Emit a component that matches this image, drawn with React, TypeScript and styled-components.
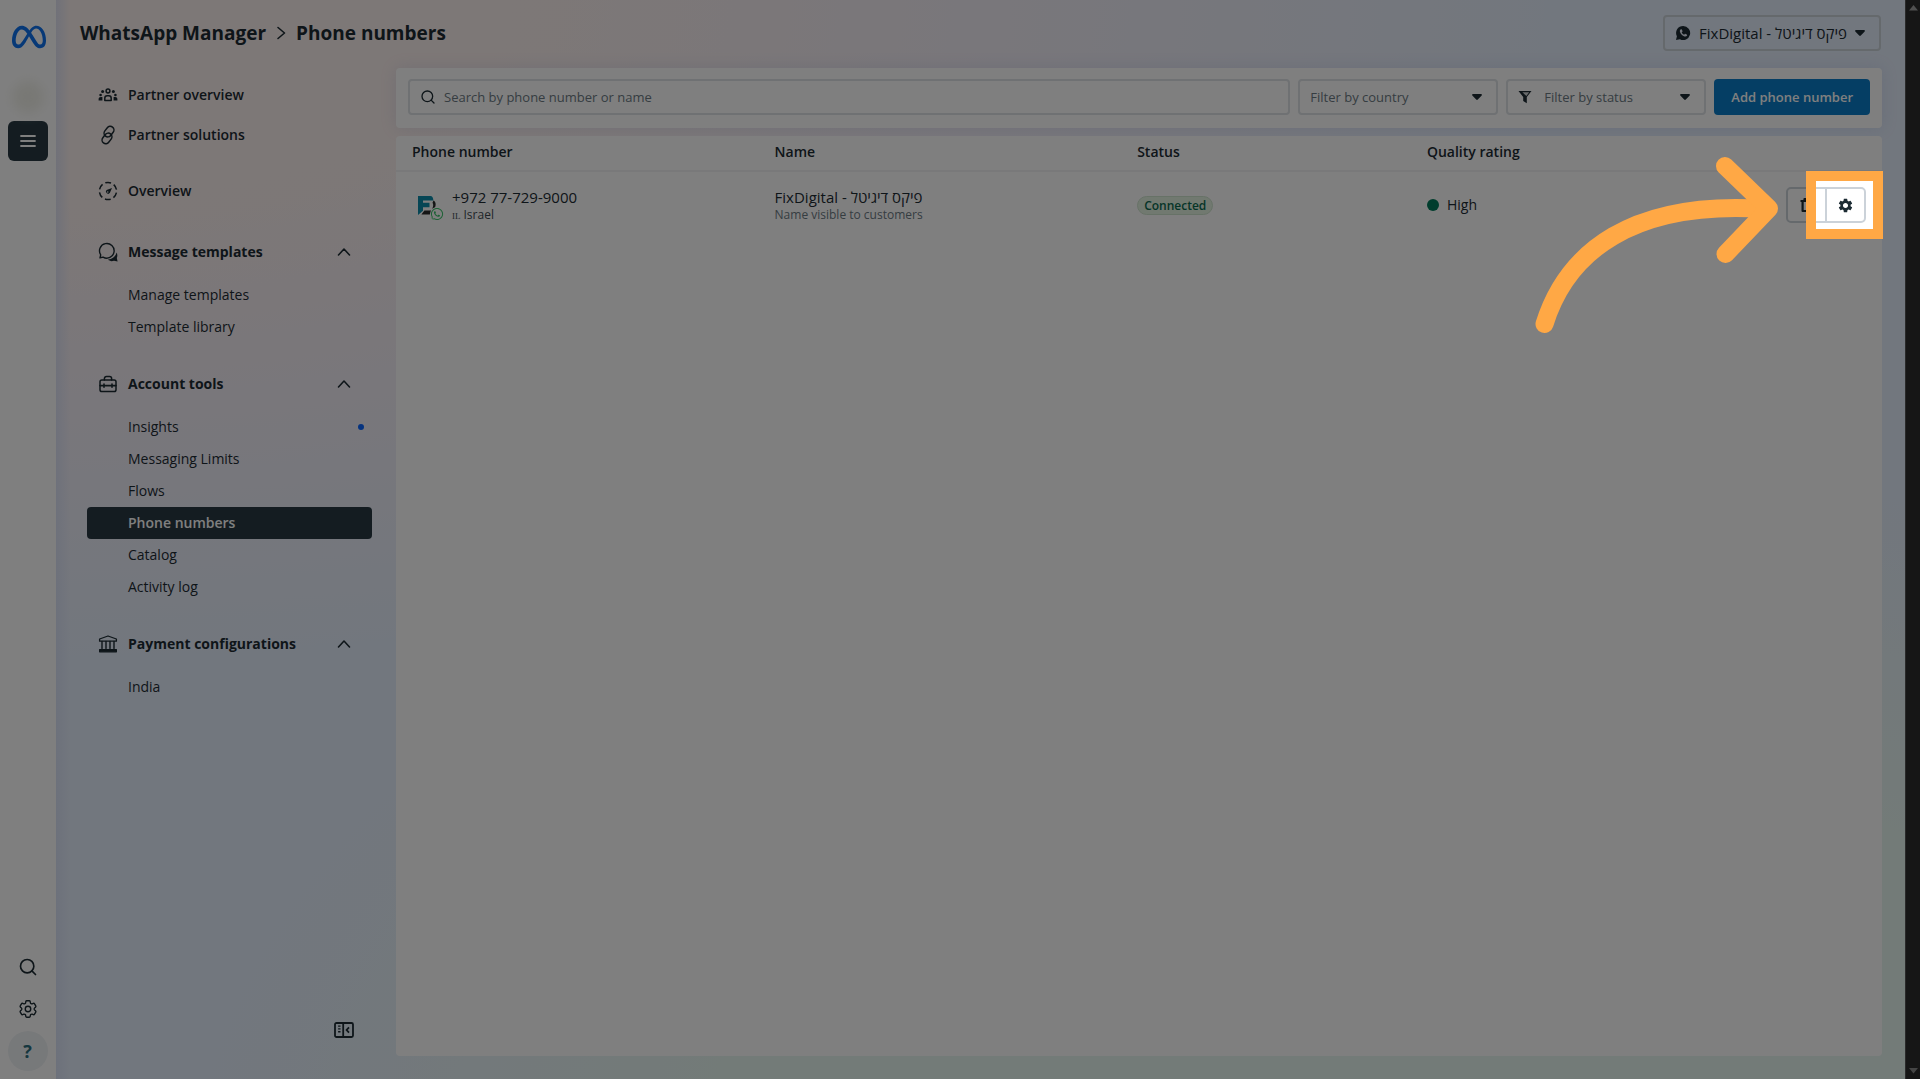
import React, { useState } from "react";
import styled, { createGlobalStyle } from "styled-components";
import { SiMeta } from "react-icons/si";
import { FaWhatsapp } from "react-icons/fa";
import { MdSettings } from "react-icons/md";
import { HiOutlineCog6Tooth } from "react-icons/hi2";
import { Search } from "lucide-react";

const ink = "#1c2b33";
const muted = "#6c7a83";
const line = "#cbd2d9";
const accent = "#ffa845";

const GlobalStyle = createGlobalStyle`
  *, *::before, *::after { box-sizing: border-box; }
  body {
    margin: 0;
    color: ${ink};
    font-family: "Open Sans", "Noto Sans", sans-serif;
    font-size: 14px;
    line-height: 20px;
  }
  button, input, select { font: inherit; color: inherit; }
  h1, ul, p { margin: 0; padding: 0; }
  ul { list-style: none; }
`;

/* ---------- page frame ---------- */

const Page = styled.div`
  display: grid;
  grid-template-columns: 56px minmax(0, 1fr) 15px;
  min-height: 100vh;
  overflow: hidden;
`;

const Rail = styled.nav`
  display: flex;
  flex-direction: column;
  align-items: center;
  padding: 20px 1px 8px 0;
  background: #fff;
`;

const RailLogo = styled.a`
  display: flex;
  margin: 0 0 27px 2px;
  color: #0f73ee;
`;

const RailAvatar = styled.span`
  width: 32px;
  height: 32px;
  margin: 0 0 8px;
  border-radius: 50%;
  background: #f1f1ea;
  filter: blur(6px);
`;

const RailButton = styled.button<{ $variant?: "menu" | "help" }>`
  display: grid;
  place-items: center;
  width: 40px;
  height: 40px;
  padding: 0;
  border: 0;
  border-radius: ${(p) => (p.$variant === "help" ? "50%" : "6px")};
  background: ${(p) => (p.$variant === "menu" ? "#283943" : p.$variant === "help" ? "#eff2f5" : "transparent")};
  color: ${(p) => (p.$variant === "menu" ? "#fff" : p.$variant === "help" ? "#2b6f7f" : ink)};
  font-size: 18px;
  font-weight: 700;
`;

const RailFooter = styled.div`
  display: flex;
  flex: 1;
  flex-direction: column;
  justify-content: flex-end;
  gap: 2px;
`;

const Workspace = styled.div`
  display: flex;
  flex-direction: column;
  background:
    linear-gradient(90deg, rgba(214, 222, 245, 0.7), rgba(214, 222, 245, 0) 14px),
    radial-gradient(ellipse 1500px 660px at 0 0, #fbf0ee 30%, rgba(244, 238, 246, 0.9) 62%, rgba(229, 238, 252, 0) 100%),
    radial-gradient(ellipse 1250px 740px at 75% 110%, #e7f6f1 60%, rgba(229, 238, 252, 0) 100%),
    #e5eefc;
`;

const ScrollTrack = styled.div`
  display: flex;
  flex-direction: column;
  justify-content: space-between;
  align-items: center;
  padding: 5px 0;
  border-left: 1px solid #555;
  background: #2c2c2c;
`;

/* ---------- header ---------- */

const Header = styled.header`
  display: flex;
  align-items: center;
  justify-content: space-between;
  height: 68px;
  padding: 0 24px 2px;
`;

const Crumbs = styled.h1`
  display: flex;
  align-items: center;
  gap: 8px;
  font-size: 19px;
  font-weight: 700;
  line-height: 24px;
`;

const Box = styled.label<{ $plain?: boolean; $width?: number }>`
  display: flex;
  align-items: center;
  gap: ${(p) => (p.$plain ? "8px" : "12px")};
  height: 36px;
  padding: 0 14px 0 10px;
  border: 2px solid ${(p) => (p.$plain ? line : "#dee2e6")};
  border-radius: 4px;
  background: ${(p) => (p.$plain ? "transparent" : "#fff")};
  ${(p) => p.$width && `width: ${p.$width}px;`}
`;

const SelectField = styled.select<{ $placeholder?: boolean }>`
  flex: 1;
  min-width: 0;
  padding: 0;
  border: 0;
  outline: 0;
  appearance: none;
  background: transparent;
  font-size: ${(p) => (p.$placeholder ? "13px" : "15px")};
  color: ${(p) => (p.$placeholder ? muted : ink)};
`;

/* ---------- side navigation ---------- */

const Body = styled.div`
  display: grid;
  grid-template-columns: 340px minmax(0, 1fr);
  flex: 1;
`;

const Side = styled.aside`
  display: flex;
  flex-direction: column;
  justify-content: space-between;
  padding: 7px 24px 41px 31px;
`;

const NavLink = styled.a<{ $apart?: boolean }>`
  display: flex;
  align-items: center;
  gap: 10px;
  height: 40px;
  margin-top: ${(p) => (p.$apart ? "16px" : "0")};
  padding-left: 11px;
  color: ${ink};
  font-weight: 600;
  text-decoration: none;
`;

const GroupButton = styled.button`
  display: flex;
  align-items: center;
  gap: 10px;
  width: 100%;
  height: 40px;
  margin: 21px 0 7px;
  padding: 0 21px 0 11px;
  border: 0;
  background: none;
  font-weight: 700;
  text-align: left;
`;

const GroupTitle = styled.span`
  flex: 1;
`;

const SubLink = styled.a<{ $current?: boolean }>`
  display: flex;
  align-items: center;
  justify-content: space-between;
  height: 32px;
  padding: 0 8px 0 41px;
  border-radius: 4px;
  background: ${(p) => (p.$current ? "#283943" : "transparent")};
  color: ${(p) => (p.$current ? "#fff" : ink)};
  font-weight: ${(p) => (p.$current ? 600 : 400)};
  text-decoration: none;
`;

const NewDot = styled.span`
  width: 6px;
  height: 6px;
  border-radius: 50%;
  background: #0a66ff;
`;

const CollapseButton = styled.button`
  display: flex;
  align-self: flex-end;
  margin-right: 18px;
  padding: 0;
  border: 0;
  background: none;
`;

/* ---------- main ---------- */

const Main = styled.main`
  display: flex;
  flex-direction: column;
  gap: 8px;
  padding: 0 23px 23px 0;
`;

const Toolbar = styled.form`
  display: flex;
  gap: 8px;
  padding: 11px 12px 13px;
  border-radius: 4px;
  background: #fff;
  box-shadow: 0 0 16px rgba(120, 140, 200, 0.18);
`;

const SearchBox = styled(Box)`
  flex: 1;
  gap: 8px;
`;

const SearchInput = styled.input`
  flex: 1;
  min-width: 0;
  padding: 0;
  border: 0;
  outline: 0;
  background: transparent;
  font-size: 13px;
  &::placeholder { color: ${muted}; opacity: 1; }
`;

const AddButton = styled.button`
  height: 36px;
  padding: 0 17px;
  border: 0;
  border-radius: 4px;
  background: #0a7cc8;
  color: #fff;
  font-size: 13px;
  font-weight: 600;
`;

const Card = styled.section`
  flex: 1;
  border-radius: 4px;
  background: #fff;
`;

const Table = styled.table`
  width: 100%;
  border-spacing: 0;
  table-layout: fixed;
`;

const Th = styled.th<{ $w?: string }>`
  width: ${(p) => p.$w || "auto"};
  height: 36px;
  padding: 0 16px 2px;
  border-bottom: 2px solid #f2f3f4;
  font-weight: 600;
  text-align: left;
`;

const Td = styled.td`
  height: 66px;
  padding: 0 16px;
`;

const Identity = styled.div`
  display: flex;
  align-items: center;
  gap: 13px;
  padding-left: 3px;
`;

const Stack = styled.div`
  display: flex;
  flex-direction: column;
`;

const Main15 = styled.span`
  font-size: 15px;
  white-space: nowrap;
`;

const Sub = styled.span<{ $strong?: boolean }>`
  font-size: 12px;
  line-height: 16px;
  color: ${(p) => (p.$strong ? "#3e4b53" : muted)};
`;

const CountryCode = styled.abbr`
  margin-right: 3px;
  font-family: "Liberation Serif", serif;
  font-size: 9px;
  text-decoration: none;
`;

const Picture = styled.span`
  position: relative;
  display: flex;
`;

const PictureBadge = styled(FaWhatsapp)`
  position: absolute;
  right: -5px;
  bottom: -4px;
  border-radius: 50%;
  background: #fff;
  color: #3cc46c;
`;

const StatusPill = styled.span`
  display: block;
  width: max-content;
  padding: 0 6px;
  border: 1px solid #cfe4cf;
  border-radius: 10px;
  background: #e3f2e0;
  color: #0b6b50;
  font-size: 12px;
  font-weight: 600;
  line-height: 17px;
`;

const Rating = styled.span`
  display: flex;
  align-items: center;
  gap: 8px;
`;

const RatingDot = styled.span`
  width: 12px;
  height: 12px;
  border-radius: 50%;
  background: #007a5a;
`;

const Actions = styled.div`
  position: relative;
  display: flex;
  width: max-content;
  margin-left: auto;
`;

const ActionButton = styled.button`
  display: grid;
  place-items: center;
  width: 41px;
  height: 36px;
  padding: 0;
  border: 2px solid ${line};
  background: #fff;
  &:first-child { border-radius: 5px 0 0 5px; }
  & + & { margin-left: -2px; border-radius: 0 5px 5px 0; }
`;

/* ---------- guided step: dims the page except for one control ---------- */

const Spotlight = styled.div`
  position: absolute;
  z-index: 10;
  top: -16px;
  left: 20px;
  width: 77px;
  height: 68px;
  border: 10px solid ${accent};
  box-shadow: 0 0 0 4000px rgba(0, 0, 0, 0.5);
  pointer-events: none;
`;

const Pointer = styled.svg`
  position: absolute;
  z-index: 11;
  top: -31px;
  left: -251px;
  pointer-events: none;
`;

/* ---------- drawings ---------- */

const Icon = ({ children, size = 20 }: { children: React.ReactNode; size?: number }) => (
  <svg width={size} height={size} viewBox="0 0 20 20" fill="none" stroke="currentColor" strokeWidth="1.5" strokeLinecap="round" strokeLinejoin="round" aria-hidden="true">
    {children}
  </svg>
);

const PeopleIcon = () => (
  <Icon>
    <circle cx="10" cy="6" r="1.9" />
    <path d="M6.800 15.400v-2.200c0-1.500 1-2.400 2.300-2.400h1.800c1.300 0 2.300.9 2.300 2.400v2.200z" />
    <g fill="currentColor" stroke="none">
      <circle cx="4.600" cy="6.600" r="1.500" />
      <circle cx="15.400" cy="6.600" r="1.500" />
      <circle cx="2.600" cy="10" r="1.300" />
      <circle cx="17.400" cy="10" r="1.300" />
      <path d="M.6 15.600v-1.400c0-1.400.9-2.200 2.200-2.200h1.600v3.600zM19.400 15.600v-1.400c0-1.400-.9-2.200-2.200-2.200h-1.600v3.600z" />
    </g>
  </Icon>
);

const ChainIcon = () => (
  <Icon>
    <g transform="rotate(-52 10 10)">
      <rect x="7.600" y="5" width="11.400" height="7.400" rx="3.700" />
      <rect x="1" y="7.600" width="11.400" height="7.400" rx="3.700" />
    </g>
  </Icon>
);

const GaugeIcon = () => (
  <Icon>
    <circle cx="10" cy="10" r="8.600" strokeDasharray="5 2.700" strokeDashoffset="-1.500" strokeLinecap="butt" pathLength="46.200" />
    <path d="M14 7l-5.400 1.900a2.100 2.100 0 1 0 3.200 3.200z" fill="currentColor" stroke="none" />
    <circle cx="9.700" cy="11" r=".8" fill="#eee" stroke="none" />
  </Icon>
);

const ChatIcon = () => (
  <Icon>
    <path d="M2.700 12.800L2 15.800l3.100-.7A7.300 7.300 0 1 0 2.700 12.800z" strokeWidth="1.400" />
    <path d="M18.600 10.500c1 2 .9 4 .2 5.600l.8 3.400-3.600-.8c-2.400.9-4.600.3-6-1.100 4.500-.4 7.900-3.300 8.600-7.100z" fill="currentColor" stroke="none" />
  </Icon>
);

const ToolboxIcon = () => (
  <Icon>
    <rect x="2" y="6" width="16" height="11.500" rx="1.800" />
    <path d="M6.400 6V4.600c0-1.200.8-2 2-2h3.200c1.200 0 2 .8 2 2V6" />
    <path d="M2 11.600h16M6 10v3.200M14 10v3.200" strokeWidth="1.600" />
  </Icon>
);

const BankIcon = () => (
  <Icon>
    <path d="M10 2L1.600 5v2.200h16.800V5z" strokeWidth="1.300" />
    <path d="M4 7.400v7M8 7.400v7M12 7.400v7M16 7.400v7" strokeWidth="1.400" />
    <path d="M1.600 17.800v-2.200h16.800v2.200z" fill="currentColor" strokeWidth="1.200" />
  </Icon>
);

const Chevron = ({ dir }: { dir: "up" | "right" }) => (
  <svg width="14" height="14" viewBox="0 0 14 14" fill="none" stroke="currentColor" strokeWidth="1.600" strokeLinecap="round" strokeLinejoin="round" aria-hidden="true">
    <path d={dir === "up" ? "M1.500 10L7 4l5.500 6" : "M4 1.500L10.500 7 4 12.500"} />
  </svg>
);

const Caret = () => (
  <svg width="10" height="6" viewBox="0 0 10 6" aria-hidden="true">
    <path d="M1 0h8c.8 0 1.200.8.7 1.400L5.800 5.600c-.4.500-1.200.500-1.600 0L.3 1.400C-.2.800.2 0 1 0z" fill={ink} />
  </svg>
);

const FunnelIcon = () => (
  <svg width="14" height="14" viewBox="0 0 14 14" aria-hidden="true">
    <path d="M.5 1h13L8.800 7v6.200L5.200 11V7z" fill={ink} />
    <path d="M4.400 2.300h6.800L8.400 6z" fill="#fff" opacity=".8" />
  </svg>
);

const BubbleIcon = () => (
  <svg width="16" height="16" viewBox="0 0 16 16" aria-hidden="true">
    <path d="M8.200 1a7 7 0 1 1-3.300 13.200L1 15l.9-3.700A7 7 0 0 1 8.200 1z" fill={ink} />
    <path d="M5.900 4.300c-.9.500-1.300 1.500-.9 2.600.8 2.200 2.300 3.700 4.500 4.500 1.100.4 2.100 0 2.600-.9.200-.4 0-.7-.3-.9l-1.300-.7c-.3-.2-.600 0-.8.200l-.5.600C8 9.200 7.100 8.300 6.700 7.200l.6-.5c.2-.2.300-.5.200-.8l-.7-1.300c-.2-.3-.5-.5-.9-.3z" fill="#e9eefa" />
  </svg>
);

const PanelIcon = () => (
  <svg width="20" height="16" viewBox="0 0 20 16" fill="none" stroke={ink} strokeWidth="1.800" aria-hidden="true">
    <rect x="1" y="1" width="18" height="14" rx="1.500" />
    <path d="M9.200 1v14M15 5.400L12.600 8l2.400 2.600" />
    <path d="M5.300 3.400v7.400" strokeWidth="2.400" strokeDasharray="1.400 1.400" />
  </svg>
);

const TrashIcon = () => (
  <svg width="16" height="16" viewBox="0 0 16 16" fill="none" stroke={ink} strokeWidth="2.200" strokeLinejoin="round" aria-hidden="true">
    <path d="M1.500 4h13M5.500 4V2h5v2M3.600 4.500V14h8.800V4.500" />
  </svg>
);

const BrandIcon = () => (
  <svg width="24" height="24" viewBox="0 0 24 24" aria-hidden="true">
    <path d="M3 3h12.500c1.600 0 2.700 1.200 2.900 4.600H8v2.200h6.500v4.400H8v3.600L3 22z" fill="#0d8dab" />
    <path d="M18.500 7.600c2.600 1.400 2.800 5 .9 8.200h-2.200c1.300-2.700 1.300-4.500.3-6zM9.400 17.600h7.400l-2 3.800H6.400z" fill="#2b2b2b" />
  </svg>
);

const TrackArrow = ({ down }: { down?: boolean }) => (
  <svg width="9" height="6" viewBox="0 0 9 6" aria-hidden="true">
    <path d={down ? "M0 0h9L4.500 5.500z" : "M0 5.500h9L4.500 0z"} fill={down ? "#8a8a8a" : "#a0a0a0"} />
  </svg>
);

/* ---------- data ---------- */

const groups = [
  { title: "Message templates", icon: <ChatIcon />, items: ["Manage templates", "Template library"] },
  {
    title: "Account tools",
    icon: <ToolboxIcon />,
    items: ["Insights", "Messaging Limits", "Flows", "Phone numbers", "Catalog", "Activity log"],
  },
  { title: "Payment configurations", icon: <BankIcon />, items: ["India"] },
];

const account = "FixDigital - פיקס דיגיטל";

function NavGroup({ title, icon, items }: (typeof groups)[number]) {
  const [open, setOpen] = useState(true);
  return (
    <>
      <GroupButton type="button" aria-expanded={open} onClick={() => setOpen(!open)}>
        {icon}
        <GroupTitle>{title}</GroupTitle>
        <Chevron dir="up" />
      </GroupButton>
      {open && (
        <ul>
          {items.map((item) => (
            <li key={item}>
              <SubLink href="#" $current={item === "Phone numbers"}>
                {item}
                {item === "Insights" && <NewDot />}
              </SubLink>
            </li>
          ))}
        </ul>
      )}
    </>
  );
}

export default function App() {
  return (
    <Page>
      <GlobalStyle />
      <Rail aria-label="Meta">
        <RailLogo href="#" aria-label="Meta home"><SiMeta size={34} /></RailLogo>
        <RailAvatar />
        <RailButton $variant="menu" aria-label="Menu">
          <Icon><path d="M3 5h14M3 10h14M3 15h14" strokeWidth="1.800" /></Icon>
        </RailButton>
        <RailFooter>
          <RailButton aria-label="Search"><Search size={20} strokeWidth={2} /></RailButton>
          <RailButton aria-label="Settings"><HiOutlineCog6Tooth size={22} /></RailButton>
          <RailButton $variant="help" aria-label="Help">?</RailButton>
        </RailFooter>
      </Rail>

      <Workspace>
        <Header>
          <Crumbs>
            <span>WhatsApp Manager</span>
            <Chevron dir="right" />
            <span>Phone numbers</span>
          </Crumbs>
          <Box $plain>
            <BubbleIcon />
            <SelectField aria-label="Account" defaultValue={account}>
              <option>{account}</option>
            </SelectField>
            <Caret />
          </Box>
        </Header>

        <Body>
          <Side>
            <nav aria-label="WhatsApp Manager">
              <NavLink href="#"><PeopleIcon />Partner overview</NavLink>
              <NavLink href="#"><ChainIcon />Partner solutions</NavLink>
              <NavLink href="#" $apart><GaugeIcon />Overview</NavLink>
              {groups.map((g) => <NavGroup key={g.title} {...g} />)}
            </nav>
            <CollapseButton type="button" aria-label="Collapse navigation"><PanelIcon /></CollapseButton>
          </Side>

          <Main>
            <Toolbar onSubmit={(e) => e.preventDefault()}>
              <SearchBox>
                <Search size={16} strokeWidth={2} />
                <SearchInput type="text" aria-label="Search" placeholder="Search by phone number or name" />
              </SearchBox>
              <Box $width={200}>
                <SelectField $placeholder aria-label="Country"><option>Filter by country</option></SelectField>
                <Caret />
              </Box>
              <Box $width={200}>
                <FunnelIcon />
                <SelectField $placeholder aria-label="Status"><option>Filter by status</option></SelectField>
                <Caret />
              </Box>
              <AddButton type="button">Add phone number</AddButton>
            </Toolbar>

            <Card>
              <Table>
                <thead>
                  <tr>
                    <Th $w="24.4%">Phone number</Th>
                    <Th $w="24.4%">Name</Th>
                    <Th $w="19.5%">Status</Th>
                    <Th $w="19.5%">Quality rating</Th>
                    <Th aria-label="Actions" />
                  </tr>
                </thead>
                <tbody>
                  <tr>
                    <Td>
                      <Identity>
                        <Picture><BrandIcon /><PictureBadge size={14} /></Picture>
                        <Stack>
                          <Main15>+972 77-729-9000</Main15>
                          <Sub $strong><CountryCode>IL</CountryCode>Israel</Sub>
                        </Stack>
                      </Identity>
                    </Td>
                    <Td>
                      <Stack>
                        <Main15>{account}</Main15>
                        <Sub>Name visible to customers</Sub>
                      </Stack>
                    </Td>
                    <Td><StatusPill>Connected</StatusPill></Td>
                    <Td><Rating><RatingDot />High</Rating></Td>
                    <Td>
                      <Actions>
                        <ActionButton type="button" aria-label="Delete"><TrashIcon /></ActionButton>
                        <ActionButton type="button" aria-label="Settings"><MdSettings size={17} /></ActionButton>
                        <Spotlight />
                        <Pointer width="245" height="178" viewBox="1535 156 245 178" fill="none" stroke={accent} strokeWidth="18" strokeLinecap="round" strokeLinejoin="round" aria-hidden="true">
                          <path d="M1544.500 324C1567 252 1632 200 1765 209" />
                          <path d="M1725 166l44 42.500-43.500 45.500" />
                        </Pointer>
                      </Actions>
                    </Td>
                  </tr>
                </tbody>
              </Table>
            </Card>
          </Main>
        </Body>
      </Workspace>

      <ScrollTrack aria-hidden="true">
        <TrackArrow />
        <TrackArrow down />
      </ScrollTrack>
    </Page>
  );
}
